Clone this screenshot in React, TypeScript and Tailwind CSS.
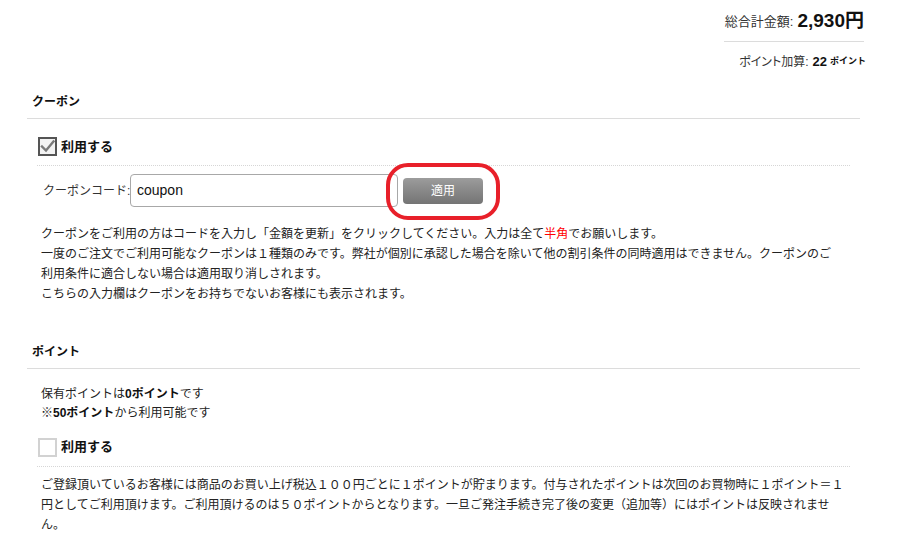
import React from "react";

function CheckBox({ checked }: { checked: boolean }) {
  return checked ? (
    <svg width="19" height="19" viewBox="0 0 19 19" className="shrink-0">
      <rect x="1" y="1" width="17" height="17" fill="#f3f3f3" stroke="#555" strokeWidth="2" />
      <path d="M4 9.5 L8 13.5 L15.5 4.5" fill="none" stroke="#7a7a7a" strokeWidth="2.4" strokeLinecap="square" />
    </svg>
  ) : (
    <svg width="19" height="19" viewBox="0 0 19 19" className="shrink-0">
      <rect x="1" y="1" width="17" height="17" fill="#fff" stroke="#d2d2d2" strokeWidth="2" />
    </svg>
  );
}

export default function App() {
  return (
    <div className="w-[915px] h-[558px] overflow-hidden bg-white text-[#222] text-[12px] font-['Liberation_Sans','Noto_Sans_CJK_JP',sans-serif]">
      {/* totals */}
      <div className="flex justify-end pr-[51px]">
        <div className="w-[140px]">
          <div className="h-[42px] pt-[2px] border-b border-[#dcdcdc] flex items-center justify-end whitespace-nowrap">
            <span className="text-[13px] text-[#333]">総合計金額:</span>
            <span className="ml-[4px] text-[19px] font-bold text-[#111]">2,930円</span>
          </div>
          <div className="h-[40px] flex items-center justify-end whitespace-nowrap -mr-[2px]">
            <span className="text-[12px] text-[#333] [font-feature-settings:'palt']">ポイント加算:</span>
            <span className="ml-[4px] text-[13px] font-bold text-[#111]">22</span>
            <span className="ml-[3px] text-[9px] font-bold text-[#111]">ポイント</span>
          </div>
        </div>
      </div>

      {/* coupon */}
      <div className="ml-[27px] w-[833px]">
        <div className="h-[37px] pt-[3px] pl-[5px] flex items-center border-b border-[#dcdcdc] font-bold text-[12px] text-[#111]">
          クーポン
        </div>
        <div className="ml-[10px] w-[813px]">
          <div className="h-[47px] pt-[9px] flex items-center border-b border-dotted border-[#d6d6d6]">
            <div className="ml-[1px] flex items-center gap-[4px]">
              <CheckBox checked />
              <span className="text-[13px] font-bold text-[#111]">利用する</span>
            </div>
          </div>
          <div className="mt-[8px] flex items-center">
            <span className="ml-[6px] w-[84px] text-[12px] text-[#333] whitespace-nowrap">クーポンコード:</span>
            <div className="ml-[3px] w-[268px] h-[33px] border border-[#a8a8a8] rounded-[4px] flex items-center pl-[6px] text-[14px] text-[#111]">
              coupon
            </div>
            <div className="relative ml-[5px]">
              <div className="w-[80px] h-[26px] rounded-[4px] bg-gradient-to-b from-[#9c9c9c] to-[#747474] flex items-center justify-center text-white text-[12px]">
                適用
              </div>
              <div className="absolute left-[-17px] top-[-15px] w-[114px] h-[57px] rounded-[22px] border-[4px] border-[#e8202a]" />
            </div>
          </div>
          <div className="mt-[17px] pl-[4px] w-[802px] leading-[20px] text-[12px] text-[#222]">
            <p>
              クーポンをご利用の方はコードを入力し「金額を更新」をクリックしてください。入力は全て<span className="text-[#f00]">半角</span>でお願いします。
            </p>
            <p>
              一度のご注文でご利用可能なクーポンは１種類のみです。弊社が個別に承認した場合を除いて他の割引条件の同時適用はできません。クーポンのご利用条件に適合しない場合は適用取り消しされます。
            </p>
            <p>こちらの入力欄はクーポンをお持ちでないお客様にも表示されます。</p>
          </div>
        </div>

        {/* points */}
        <div className="mt-[28px] h-[37px] pt-[3px] pl-[5px] flex items-center border-b border-[#dcdcdc] font-bold text-[12px] text-[#111]">
          ポイント
        </div>
        <div className="ml-[10px] w-[813px]">
          <div className="mt-[16px] pl-[4px] leading-[19px] text-[12px] text-[#222]">
            <p>
              保有ポイントは<b className="text-[#111]">0ポイント</b>です
            </p>
            <p>
              ※<b className="text-[#111]">50ポイント</b>から利用可能です
            </p>
          </div>
          <div className="h-[44px] pt-[5px] flex items-center border-b border-dotted border-[#d6d6d6]">
            <div className="ml-[1px] flex items-center gap-[4px]">
              <CheckBox checked={false} />
              <span className="text-[13px] font-bold text-[#111]">利用する</span>
            </div>
          </div>
          <div className="mt-[8px] pl-[4px] w-[812px] leading-[20px] text-[12px] text-[#222]">
            <p>
              ご登録頂いているお客様には商品のお買い上げ税込１００円ごとに１ポイントが貯まります。付与されたポイントは次回のお買物時に１ポイント＝１円としてご利用頂けます。ご利用頂けるのは５０ポイントからとなります。一旦ご発注手続き完了後の変更（追加等）にはポイントは反映されません。
            </p>
          </div>
        </div>
      </div>
    </div>
  );
}
